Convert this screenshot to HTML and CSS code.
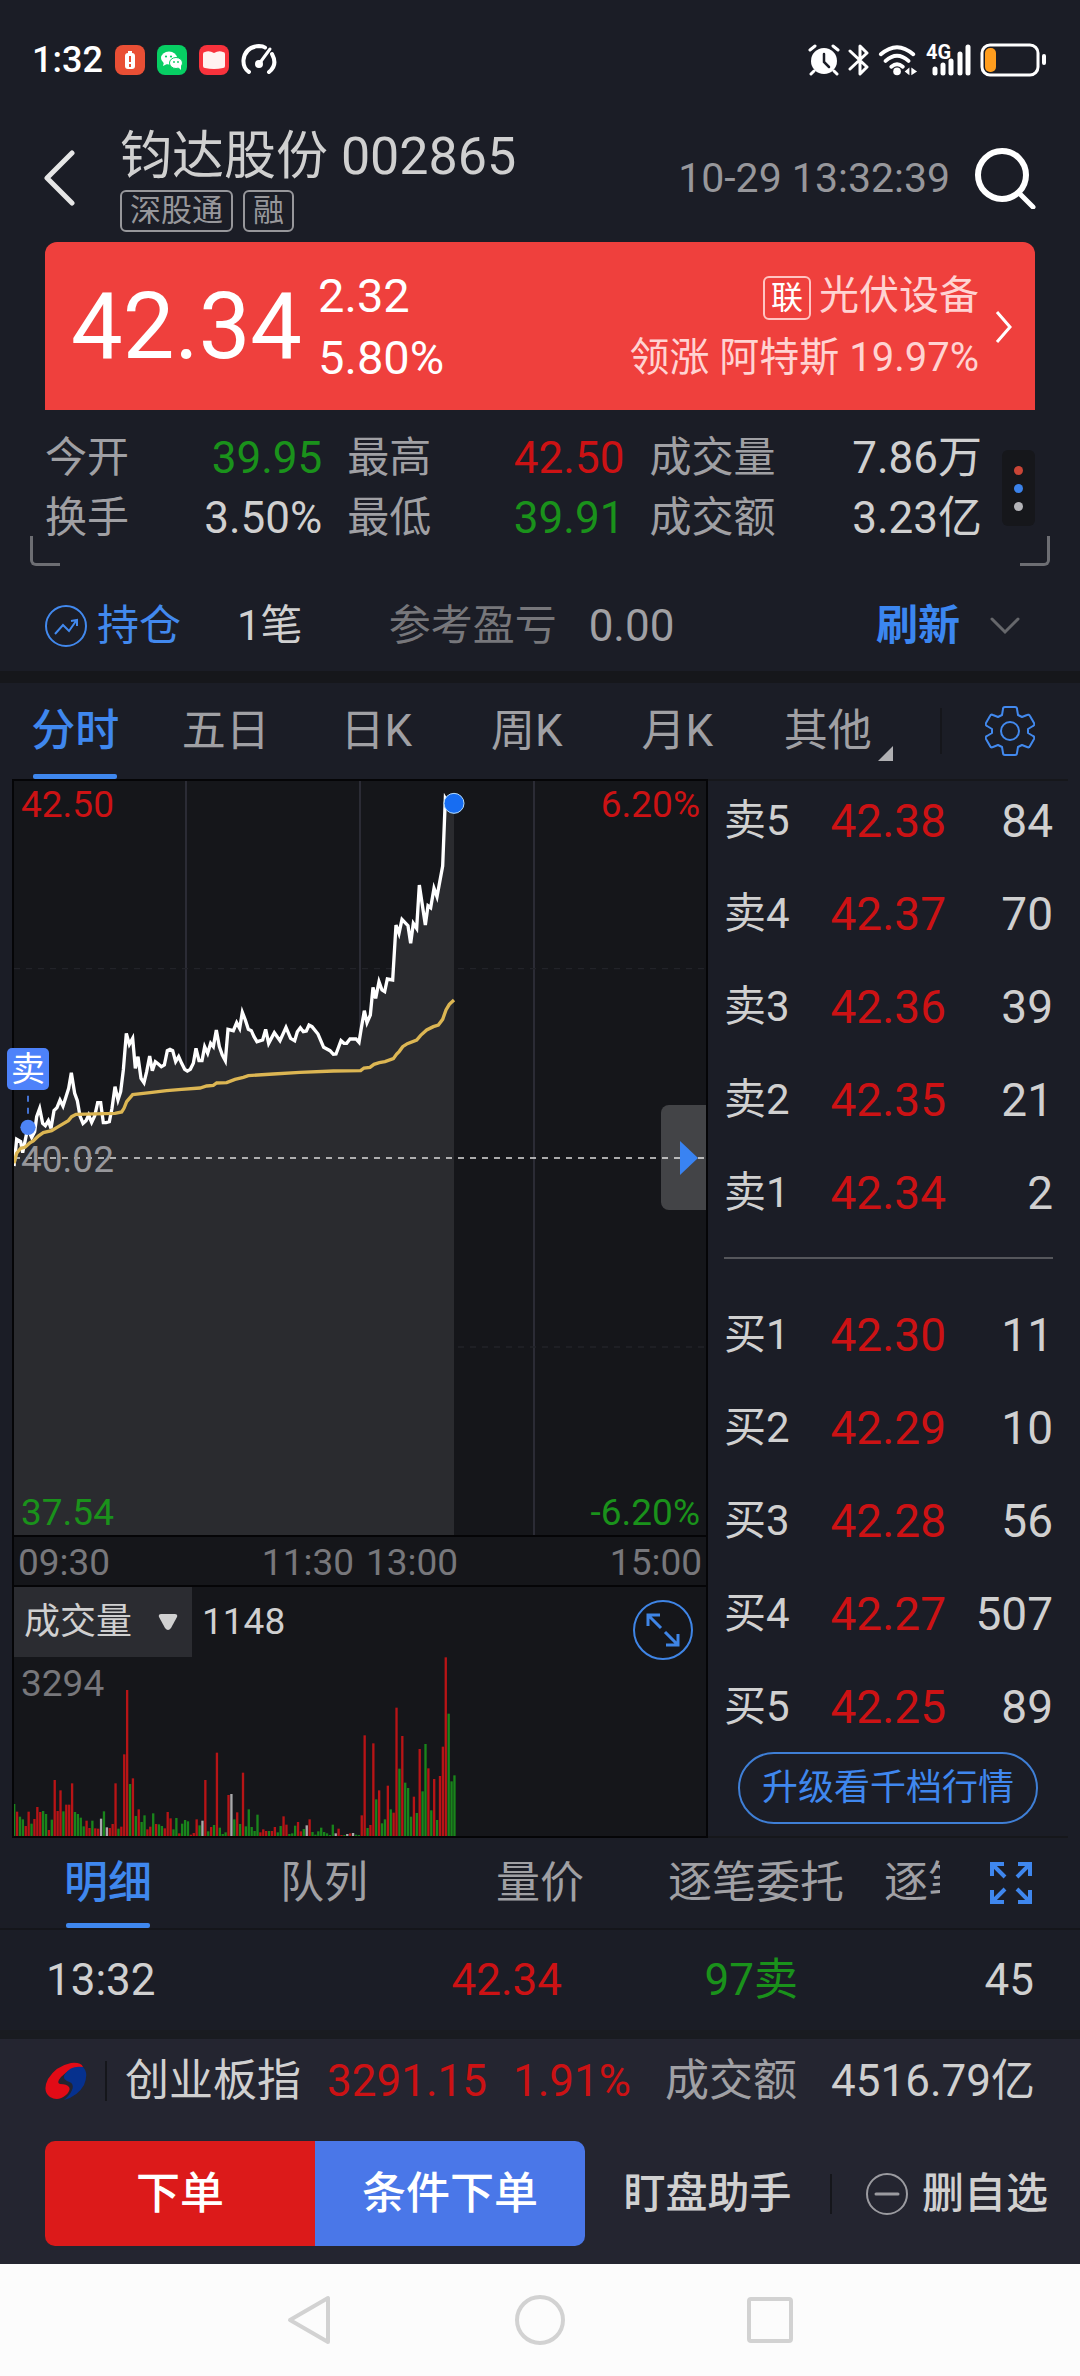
FILE: index.html
```html
<!DOCTYPE html>
<html lang="zh-CN">
<head>
    <meta charset="UTF-8">
    <meta name="viewport" content="width=device-width, initial-scale=1.0">
    <title>钧达股份 002865</title>
    <link rel="stylesheet" href="styles.css">
</head>
<body>
    <!-- Status bar -->
    <div class="status">
        <span class="clock">1:32</span>
        <svg class="app" viewBox="0 0 30 30"><rect width="30" height="30" rx="8" fill="#e94f35"/><rect x="10" y="8" width="10" height="16" rx="3" fill="#fff"/><rect x="13" y="6" width="4" height="3" fill="#fff"/><path d="M15 11v6M15 19v3" stroke="#e94f35" stroke-width="2"/></svg>
        <svg class="app" viewBox="0 0 30 30"><rect width="30" height="30" rx="8" fill="#07ce63"/><ellipse cx="12" cy="13" rx="8" ry="6.500" fill="#fff"/><path d="M7 17l-1 4 4-2z" fill="#fff"/><ellipse cx="19" cy="18" rx="6.500" ry="5.500" fill="#fff" stroke="#07ce63"/><path d="M21 22l3 3v-5z" fill="#fff"/><g fill="#07ce63"><circle cx="9" cy="11.500" r="1.100"/><circle cx="14" cy="11.500" r="1.100"/><circle cx="17" cy="17" r=".9"/><circle cx="21" cy="17" r=".9"/></g></svg>
        <svg class="app" viewBox="0 0 30 30"><rect width="30" height="30" rx="8" fill="#f8323c"/><path d="M6 7Q10 5 15 8Q20 5 24 7Q26 7 26 9V21Q26 23 24 23Q15 25 6 23Q4 23 4 21V9Q4 7 6 7Z" fill="#fff2f0"/></svg>
        <svg class="gauge" viewBox="0 0 36 32" fill="none" stroke="#fff" stroke-width="4" stroke-linecap="round"><path d="M8 28Q2 24 2.500 16Q4 3 18 2Q22 2 24 3.500M31 10Q37 21 28 28"/><path d="M29 5L18 20" stroke-width="3"/><circle cx="18" cy="20" r="2"/></svg>
        <div class="signals">
            <svg width="32" height="32" viewBox="0 0 32 32" fill="none" stroke="#fff" stroke-width="3" stroke-linecap="round"><circle cx="16" cy="17" r="13" fill="#fff" stroke="none"/><path d="M2 6l5-4M30 6l-5-4M6 27l-3 3M26 27l3 3"/><path d="M16 10v8l5 5" stroke="#1b1d26" stroke-width="2.500"/></svg>
            <svg width="22" height="32" viewBox="0 0 22 32" fill="none" stroke="#fff" stroke-width="3" stroke-linejoin="round" stroke-linecap="round"><path d="M2 7l17 16-7 7V2l7 7L2 25"/></svg>
            <svg width="40" height="32" viewBox="0 0 42 32" fill="none" stroke="#fff" stroke-width="4" stroke-linecap="round"><path d="M3 10Q20-5 37 10M8 17Q20 6 32 17M14 23Q20 18 26 23"/><circle cx="20" cy="28" r="4" fill="#fff" stroke="none"/><path d="M33 24v8l-5-4zM35 24v8l6-4z" fill="#fff" stroke="none"/></svg>
            <svg class="cell" width="46" height="32" viewBox="0 0 46 32"><text class="net" x="0" y="15">4G</text><g stroke="#fff" stroke-width="5" stroke-linecap="round"><path d="M9 25v4M17 21v8M25 17v12M34 10v19M42 3v26"/></g></svg>
            <svg width="66" height="34" viewBox="0 0 66 34"><rect x="2" y="2" width="56" height="30" rx="8" fill="none" stroke="#fff" stroke-width="3"/><rect x="5" y="5" width="11" height="24" rx="5" fill="#ff9d1e"/><rect x="62" y="11" width="4" height="11" rx="2" fill="#fff"/></svg>
        </div>
    </div>

    <!-- Title -->
    <header class="header">
        <button class="icon-btn back" aria-label="返回"><svg width="32" height="56" viewBox="0 0 32 56"><path d="M28 3L3 28l25 25" fill="none" stroke="#e6e6e6" stroke-width="5" stroke-linecap="round" stroke-linejoin="round"/></svg></button>
        <div class="title">
            <h1>钧达股份 002865</h1>
            <div class="tags"><span>深股通</span><span>融</span></div>
        </div>
        <time>10-29 13:32:39</time>
        <button class="icon-btn" aria-label="搜索"><svg width="62" height="62" viewBox="0 0 62 62" fill="none" stroke="#fff"><circle cx="28" cy="28" r="24" stroke-width="6"/><path d="M46 47l13 13" stroke-width="5" stroke-linecap="round"/></svg></button>
    </header>

    <!-- Price card -->
    <section class="price-card">
        <strong>42.34</strong>
        <div class="change"><span>2.32</span><span>5.80%</span></div>
        <div class="sector">
            <div><span class="link-tag">联</span>光伏设备</div>
            <div>领涨 阿特斯 19.97%</div>
        </div>
        <svg width="18" height="34" viewBox="0 0 18 34"><path d="M2 2l13 15L2 32" fill="none" stroke="#fff" stroke-width="3"/></svg>
    </section>

    <section class="stats">
        <dl>
            <div><dt>今开</dt><dd class="down">39.95</dd></div>
            <div><dt>最高</dt><dd class="up">42.50</dd></div>
            <div><dt>成交量</dt><dd>7.86万</dd></div>
            <div><dt>换手</dt><dd>3.50%</dd></div>
            <div><dt>最低</dt><dd class="down">39.91</dd></div>
            <div><dt>成交额</dt><dd>3.23亿</dd></div>
        </dl>
        <button class="more" aria-label="更多"><i></i><i></i><i></i></button>
    </section>

    <section class="position">
        <svg width="42" height="42" viewBox="0 0 42 42" fill="none" stroke="#4289ee" stroke-width="2"><circle cx="21" cy="21" r="20"/><path d="M10 29l8-9 6 6 7-10M26 16l6-1v6"/></svg>
        <span class="hold">持仓</span>
        <span class="count">1笔</span>
        <span class="pl-label">参考盈亏</span>
        <span class="pl">0.00</span>
        <button class="refresh">刷新</button>
        <svg width="30" height="18" viewBox="0 0 30 18"><path d="M2 2l13 13L28 2" fill="none" stroke="#66676b" stroke-width="3" stroke-linecap="round"/></svg>
    </section>

    <!-- Chart tabs -->
    <nav class="tabs chart-tabs">
        <div class="tab-list">
            <button class="active">分时</button>
            <button>五日</button>
            <button>日K</button>
            <button>周K</button>
            <button>月K</button>
            <button class="other">其他</button>
        </div>
        <button class="icon-btn tool" aria-label="设置"><svg width="50" height="50" viewBox="0 0 50 50" fill="none" stroke="#4289ee" stroke-width="2" stroke-linejoin="round"><path d="M20 1h10q2 0 2 2l1 6q2 1 4 2l5-2q2-1 3 1l4 7q1 2-1 3l-5 3v4l5 3q2 1 1 3l-4 7q-1 2-3 1l-5-2-4 2-1 6q0 2-2 2H20q-2 0-2-2l-1-6-4-2-5 2q-2 1-3-1l-4-7q-1-2 1-3l5-3v-4l-5-3q-2-1-1-3l4-7q1-2 3-1l5 2 4-2 1-6q0-2 2-2z"/><circle cx="25" cy="25" r="9"/></svg></button>
    </nav>

    <main class="market">
        <div class="chart">
            <div class="pane price-pane">
                <svg viewBox="42 3 2076 2262" preserveAspectRatio="none">
                    <g stroke="#30313b" stroke-width="5"><path d="M558 3V2265M1080 3V2265M1602 3V2265"/></g>
                    <path d="M42 566H2118M42 1701H2118" stroke="#222329" stroke-width="4" stroke-dasharray="18 18"/>
                    <path id="area" fill="#2a2b2f"/>
                    <path d="M42 1134H2118" stroke="#dcdcdc" stroke-width="5" stroke-dasharray="18 18"/>
                    <polyline id="price" fill="none" stroke="#fff" stroke-width="10"/>
                    <polyline id="avg" fill="none" stroke="#dcb653" stroke-width="10"/>
                    <circle cx="1362" cy="70" r="30" fill="#176df2" stroke="#b5ddff" stroke-width="3"/>
                    <path d="M84 947V1003" stroke="#4d84f5" stroke-width="5" stroke-dasharray="18 18"/>
                    <circle cx="84" cy="1042" r="23" fill="#4d84f5"/>
                </svg>
                <span class="label top-left up">42.50</span>
                <span class="label top-right up">6.20%</span>
                <span class="label mid-left">40.02</span>
                <span class="label bottom-left down">37.54</span>
                <span class="label bottom-right down">-6.20%</span>
                <span class="sell-mark">卖</span>
                <button class="expand" aria-label="展开"><svg width="18" height="34" viewBox="0 0 18 34"><path d="M0 0l18 17L0 34z" fill="#3983f2"/></svg></button>
            </div>
            <div class="pane axis"><span>09:30</span><span class="noon"><span>11:30</span><span>13:00</span></span><span>15:00</span></div>
            <div class="pane volume-pane">
                <svg class="bars" id="bars" viewBox="42 321 2076 747" preserveAspectRatio="none"></svg>
                <div class="volume-head">
                    <div class="picker">
                        <select aria-label="指标"><option>成交量</option></select>
                        <svg width="20" height="18" viewBox="0 0 20 18"><path d="M3 1h14q3 0 2 3l-6 11q-3 4-6 0L1 4q-1-3 2-3z" fill="#d0d0d0"/></svg>
                    </div>
                    <span>1148</span>
                    <button class="icon-btn zoom" aria-label="放大"><svg width="60" height="60" viewBox="0 0 60 60" fill="none" stroke="#3f85e6" stroke-width="2"><circle cx="30" cy="30" r="29"/><path d="M15 26V15h12M15 15l13 13M45 34v11H33M45 45L32 32" stroke-width="3"/></svg></button>
                </div>
                <div class="peak">3294</div>
            </div>
        </div>

        <!-- Order book -->
        <aside class="book">
            <table>
                <tr><th>卖5</th><td>42.38</td><td>84</td></tr>
                <tr><th>卖4</th><td>42.37</td><td>70</td></tr>
                <tr><th>卖3</th><td>42.36</td><td>39</td></tr>
                <tr><th>卖2</th><td>42.35</td><td>21</td></tr>
                <tr><th>卖1</th><td>42.34</td><td>2</td></tr>
            </table>
            <hr>
            <table>
                <tr><th>买1</th><td>42.30</td><td>11</td></tr>
                <tr><th>买2</th><td>42.29</td><td>10</td></tr>
                <tr><th>买3</th><td>42.28</td><td>56</td></tr>
                <tr><th>买4</th><td>42.27</td><td>507</td></tr>
                <tr><th>买5</th><td>42.25</td><td>89</td></tr>
            </table>
            <button class="upgrade">升级看千档行情</button>
        </aside>
    </main>

    <!-- Trade details -->
    <nav class="tabs detail-tabs">
        <div class="tab-list">
            <button class="active">明细</button>
            <button>队列</button>
            <button>量价</button>
            <button>逐笔委托</button>
            <button>逐笔成交</button>
        </div>
        <button class="icon-btn tool" aria-label="全屏"><svg width="42" height="42" viewBox="0 0 42 42" fill="none" stroke="#3f87ee" stroke-width="4"><path d="M2 14V2h12M2 2l13 13M28 2h12v12M40 2L27 15M2 28v12h12M2 40l13-13M40 28v12H28M40 40L27 27"/></svg></button>
    </nav>
    <div class="tick"><span>13:32</span><span class="up">42.34</span><span class="down">97卖</span><span>45</span></div>

    <footer class="dock">
        <div class="index">
            <svg width="42" height="38" viewBox="0 0 42 38"><path d="M38 5Q36 0 26 1Q11 4 3 17Q-3 29 5 35Q13 40 21 33Q26 28 24 25Q22 22 15 22Q11 21 16 15Q23 7 38 5Z" fill="#e20b16"/><path d="M38 5Q26 3 20 12Q17 17 22 19Q30 21 27 28Q25 33 19 38Q33 34 39 23Q44 11 38 5Z" fill="#06318e"/></svg>
            <i class="bar"></i>
            <span>创业板指</span>
            <span class="up quote">3291.15</span>
            <span class="up">1.91%</span>
            <span class="muted">成交额</span>
            <span class="amount">4516.79亿</span>
        </div>
        <div class="actions">
            <button class="buy">下单</button>
            <button class="cond">条件下单</button>
            <button class="plain">盯盘助手</button>
            <i class="bar"></i>
            <button class="remove"><svg width="42" height="42" viewBox="0 0 42 42" fill="none" stroke="#9b9ba0" stroke-width="2"><circle cx="21" cy="21" r="20"/><path d="M10 21h22" stroke-width="3" stroke-linecap="round"/></svg>删自选</button>
        </div>
    </footer>

    <div class="sysnav">
        <svg width="52" height="52" viewBox="0 0 52 52"><path d="M44 4v44L6 26z"/></svg>
        <svg width="52" height="52" viewBox="0 0 52 52"><circle cx="26" cy="26" r="23"/></svg>
        <svg width="52" height="52" viewBox="0 0 52 52"><rect x="5" y="5" width="42" height="42" rx="2"/></svg>
    </div>

    <script>
        const price = "42,1158 50,1078 62,1085 68,1118 83,1045 95,1072 104,1055 110,1010 119,985 128,1030 136,1037 145,1022 153,1045 162,992 171,983 180,960 189,978 198,950 206,925 214,878 224,940 232,962 240,1008 249,1030 258,1022 266,1005 275,1027 284,1008 293,968 302,968 310,1028 318,1028 328,1025 336,985 345,920 354,960 362,935 370,870 379,760 388,793 398,775 406,865 414,830 423,895 432,908 440,875 449,828 457,872 466,845 475,852 484,860 493,855 502,812 510,808 518,812 527,845 536,830 545,850 554,868 562,873 571,868 580,850 588,805 597,842 606,842 614,800 623,820 632,790 640,800 649,750 658,800 667,825 676,842 684,748 700,752 710,728 719,745 727,697 736,720 745,748 754,752 762,770 771,785 788,780 797,748 806,790 823,758 840,782 858,742 872,775 884,782 892,755 901,743 910,755 919,753 927,735 936,740 954,762 971,802 990,812 1000,823 1008,822 1023,782 1032,790 1040,790 1050,777 1068,777 1077,787 1083,750 1093,692 1101,728 1111,705 1119,622 1127,655 1137,605 1146,630 1154,635 1162,597 1178,600 1188,435 1197,460 1206,418 1224,437 1232,490 1240,430 1250,445 1258,315 1276,435 1284,377 1292,383 1302,325 1311,350 1328,258 1336,55 1345,70 1362,70";
        const avg = "42,1150 50,1120 62,1105 75,1102 90,1088 100,1083 115,1068 130,1058 155,1052 175,1040 205,1022 215,1010 228,1003 345,1000 365,996 372,985 380,965 398,944 450,938 500,932 545,928 600,924 620,918 640,916 650,909 680,908 705,898 730,892 745,887 820,882 900,877 1000,873 1082,872 1092,864 1110,862 1122,853 1138,848 1155,845 1180,836 1190,822 1198,814 1208,800 1222,791 1250,780 1262,766 1280,750 1300,740 1315,735 1328,718 1338,690 1348,673 1362,660";
        document.getElementById("price").setAttribute("points", price);
        document.getElementById("avg").setAttribute("points", avg);
        document.getElementById("area").setAttribute("d", `M${price} V2265 H42 Z`);

        // one bar per minute: r = up, g = down, w = flat
        const volume = "g96 r73 g58 g50 r30 r73 g37 r51 r87 r72 g75 g66 r18 g49 r168 r75 r137 g74 r94 r94 r158 g72 g66 g55 g29 r46 r24 g46 r23 r22 w52 g74 w26 r24 r36 r158 g22 r28 r245 r438 g156 r173 g60 r80 g42 g62 r20 r28 g68 r36 g35 g30 r23 r72 r53 g20 g54 r8 g37 g48 g44 r4 r9 r50 g32 w46 r168 g14 r27 g33 r250 g25 g6 g11 r123 w126 g50 r71 g36 r190 g29 g80 g27 g15 g64 r11 r20 r15 g15 r15 r27 g11 g30 r59 r34 g6 g8 g31 r42 r14 g21 w32 r50 g12 g4 g14 g25 g12 g8 g3 g34 w8 r22 r3 g3 w6 r8 w9 g4 g3 r62 r302 g24 r33 r278 g110 r137 g38 g50 r151 g80 r70 r385 g202 r300 g160 g144 g58 r118 g69 r261 g134 g276 r203 g77 r171 g48 r180 r268 r536 g367 g164 g182";
        const colors = { r: "#b81416", g: "#19851b", w: "#a9a9ab" };
        document.getElementById("bars").innerHTML = volume.split(" ").map((bar, i) => {
            const h = Number(bar.slice(1));
            return `<rect x="${39 + i * 8.69}" y="${1068 - h}" width="7" height="${h}" fill="${colors[bar[0]]}"/>`;
        }).join("");
    </script>
</body>
</html>
```
FILE: styles.css
```css
* {
    box-sizing: border-box;
}

body {
    margin: 0;
    background: #1b1d26;
    color: #d0d0d0;
    font-family: Roboto, "Noto Sans CJK SC", sans-serif;
    font-size: 44px;
    line-height: 60px;
}

button, select {
    padding: 0;
    border: none;
    background: none;
    color: inherit;
    font: inherit;
}

svg {
    display: block;
    flex: none;
}

h1, dl, dd {
    margin: 0;
}

.up {
    color: #cc1214;
}

.down {
    color: #1a921b;
}

.muted {
    color: #a0a0a4;
}

.bar {
    width: 2px;
    height: 40px;
    background: #15161b;
}

/* Status bar */
.status {
    display: flex;
    align-items: center;
    gap: 12px;
    height: 120px;
    padding: 0 34px 0 32px;
    color: #fff;
}

.clock {
    font-size: 36px;
    font-weight: 500;
}

.app {
    width: 30px;
    height: 30px;
}

.gauge {
    width: 36px;
    height: 32px;
}

.signals {
    display: flex;
    align-items: center;
    gap: 8px;
    margin-left: auto;
}

.cell {
    overflow: visible;
}

.net {
    fill: #fff;
    font-size: 20px;
    font-weight: 700;
}

/* Header */
.header {
    display: flex;
    align-items: center;
    padding: 4px 44px 10px;
}

.title {
    margin-left: 44px;
}

.title h1 {
    font-size: 52px;
    font-weight: 400;
    line-height: 66px;
}

.tags {
    display: flex;
    gap: 10px;
}

.tags span {
    padding: 0 8px;
    border: 2px solid #97979b;
    border-radius: 6px;
    color: #97979b;
    font-size: 31px;
    line-height: 38px;
}

.header time {
    margin: 0 24px 0 auto;
    color: #97979b;
    font-size: 41px;
}

/* Price card */
.price-card {
    display: flex;
    align-items: center;
    height: 168px;
    margin: 0 45px;
    padding: 2px 22px 0 26px;
    border-radius: 12px 12px 0 0;
    background: #ef403d;
    color: #fff;
}

.price-card strong {
    font-size: 92px;
    font-weight: 400;
}

.change {
    display: flex;
    flex-direction: column;
    margin-left: 16px;
    font-size: 47px;
    line-height: 62px;
}

.sector {
    margin: 0 16px 0 auto;
    color: #ffd3d2;
    font-size: 40px;
    line-height: 62px;
    text-align: right;
}

.link-tag {
    display: inline-block;
    margin-right: 8px;
    padding: 0 6px;
    border: 2px solid #ffc4c2;
    border-radius: 6px;
    color: #fff;
    font-size: 32px;
    line-height: 40px;
    vertical-align: middle;
}

/* Stats */
.stats {
    position: relative;
    display: flex;
    align-items: center;
    gap: 20px;
    padding: 18px 45px 33px;
}

.stats::before,
.stats::after {
    content: "";
    position: absolute;
    bottom: 15px;
    width: 27px;
    height: 27px;
    border: solid #6d6e73;
    border-width: 0 0 3px 3px;
    border-bottom-left-radius: 6px;
}

.stats::before {
    left: 30px;
}

.stats::after {
    right: 30px;
    border-width: 0 3px 3px 0;
    border-radius: 0 0 6px 0;
}

.stats dl {
    flex: 1;
    display: grid;
    grid-template-columns: 5fr 5fr 6fr;
    column-gap: 25px;
}

.stats dl div {
    display: flex;
    justify-content: space-between;
}

.stats dt {
    color: #a0a0a4;
    font-size: 42px;
}

.more {
    display: flex;
    flex-direction: column;
    align-items: center;
    justify-content: center;
    gap: 9px;
    width: 33px;
    height: 76px;
    border-radius: 6px;
    background: #16171b;
}

.more i {
    width: 9px;
    height: 9px;
    border-radius: 50%;
    background: #b4b4b8;
}

.more i:nth-child(1) {
    background: #c94536;
}

.more i:nth-child(2) {
    background: #3b82ea;
}

/* Position */
.position {
    display: flex;
    align-items: center;
    height: 90px;
    padding: 0 60px 0 45px;
    font-size: 42px;
}

.hold {
    margin-left: 10px;
    color: #4289ee;
}

.count {
    margin-left: 56px;
}

.pl-label {
    margin-left: 86px;
    color: #77777b;
}

.pl {
    margin-left: 32px;
    color: #a0a0a4;
    font-size: 44px;
}

.refresh {
    margin: 0 30px 0 auto;
    color: #3b86f0;
    font-weight: 700;
}

/* Tabs */
.tabs {
    display: flex;
    color: #a0a0a4;
}

.tab-list {
    flex: 1;
    display: flex;
    overflow: hidden;
}

.tab-list button {
    position: relative;
    flex: 1 0 0;
}

.tab-list .active {
    color: #3f87ee;
    font-weight: 500;
}

.active::after {
    content: "";
    position: absolute;
    left: 50%;
    bottom: 0;
    width: 84px;
    height: 5px;
    margin-left: -42px;
    border-radius: 2px;
    background: #3f87ee;
}

.tool {
    display: flex;
    align-items: center;
    margin-right: 45px;
}

.chart-tabs {
    height: 108px;
    border-top: 12px solid #16171b;
}

.chart-tabs .tool {
    position: relative;
    padding-left: 82px;
}

.chart-tabs .tool::before {
    content: "";
    position: absolute;
    left: 37px;
    width: 2px;
    height: 46px;
    background: #15161b;
}

.other::after {
    content: "";
    position: absolute;
    right: 10px;
    bottom: 18px;
    border-left: 15px solid transparent;
    border-bottom: 15px solid #b0b0b3;
}

.detail-tabs {
    height: 92px;
    border-bottom: 2px solid #15161b;
}

.detail-tabs .tab-list {
    margin-right: 50px;
}

.detail-tabs .tab-list button {
    flex: 0 0 20%;
    min-width: 216px;
}

.detail-tabs .tool {
    margin-right: 48px;
}

/* Chart and order book */
.market {
    display: flex;
    margin: 0 12px;
}

.chart {
    flex: 1;
    background: #15161a;
    border: solid #050507;
    border-width: 0 2px;
    font-size: 37px;
}

.pane {
    position: relative;
    border-top: 2px solid #050507;
}

.price-pane {
    height: 756px;
}

.price-pane > svg,
.bars {
    width: 100%;
    height: 100%;
}

.label {
    position: absolute;
    line-height: 44px;
}

.top-left {
    left: 7px;
    top: 2px;
}

.top-right {
    right: 6px;
    top: 2px;
}

.mid-left {
    left: 7px;
    top: 50%;
    margin-top: -20px;
    color: #97979b;
}

.bottom-left {
    left: 7px;
    bottom: 0;
}

.bottom-right {
    right: 6px;
    bottom: 0;
}

.sell-mark {
    position: absolute;
    left: -7px;
    top: 267px;
    width: 42px;
    border-radius: 5px;
    background: #4d82fa;
    color: #fff;
    font-size: 34px;
    line-height: 42px;
    text-align: center;
}

.expand {
    position: absolute;
    right: 0;
    top: 50%;
    width: 45px;
    height: 105px;
    margin-top: -53px;
    padding-left: 19px;
    border-radius: 8px 0 0 8px;
    background: rgba(255, 255, 255, 0.2);
}

.axis {
    display: flex;
    justify-content: space-between;
    height: 50px;
    padding: 0 4px;
    color: #77777b;
    line-height: 52px;
}

.noon {
    display: flex;
    gap: 12px;
}

.volume-pane {
    height: 253px;
    border-bottom: 2px solid #050507;
}

.bars {
    position: absolute;
    inset: 0;
}

.volume-head {
    display: flex;
    align-items: center;
    gap: 10px;
    height: 70px;
}

.picker {
    display: flex;
    align-items: center;
    justify-content: space-between;
    width: 178px;
    height: 70px;
    padding: 0 14px 0 10px;
    background: #2b2c31;
}

.picker select {
    appearance: none;
    font-size: 36px;
}

.zoom {
    margin: 16px 13px 0 auto;
}

.peak {
    padding-left: 7px;
    color: #77777b;
    line-height: 54px;
}

.book {
    width: 360px;
    padding: 10px 15px 0 16px;
    border: solid #16171b;
    border-width: 2px 0;
    font-size: 46px;
}

.book table {
    width: 100%;
    margin: -16px 0;
    border-spacing: 0;
    line-height: 92px;
}

.book th,
.book td {
    padding: 0 0 1px;
    text-align: right;
}

.book th {
    width: 66px;
    font-size: 42px;
    font-weight: 400;
    text-align: left;
    white-space: nowrap;
}

.book td:nth-child(2) {
    width: 156px;
    color: #cc1214;
}

.book hr {
    margin: 33px 0 46px;
    border: none;
    border-top: 2px solid #55565b;
}

.upgrade {
    display: block;
    width: 300px;
    height: 72px;
    margin: 14px 0 0 14px;
    border: 2px solid #3f7fd6;
    border-radius: 36px;
    color: #3f87ee;
    font-size: 36px;
}

/* Last trade */
.tick {
    display: grid;
    grid-template-columns: 280px 1fr 1fr 1fr;
    height: 109px;
    padding: 0 46px;
    border-bottom: 9px solid #191b20;
    line-height: 100px;
    text-align: right;
}

.tick span:first-child {
    text-align: left;
}

/* Dock */
.dock {
    padding-bottom: 18px;
    background: #242530;
}

.index {
    display: flex;
    align-items: center;
    gap: 18px;
    height: 84px;
    padding: 0 45px;
}

.index .quote {
    margin: 0 8px;
}

.index .muted,
.index .amount {
    margin-left: auto;
}

.actions {
    display: flex;
    align-items: center;
    height: 123px;
    padding: 18px 32px 0 45px;
    font-size: 42px;
    font-weight: 500;
}

.buy,
.cond {
    width: 270px;
    height: 105px;
    background: #dc1a1a;
    color: #fff;
    font-size: 44px;
}

.buy {
    border-radius: 10px 0 0 10px;
}

.cond {
    border-radius: 0 10px 10px 0;
    background: #4a77e8;
}

.plain {
    flex: 1;
}

.remove {
    display: flex;
    align-items: center;
    gap: 14px;
    margin-left: 34px;
}

/* System navigation */
.sysnav {
    display: flex;
    justify-content: center;
    align-items: center;
    gap: 178px;
    height: 112px;
    background: #fcfcfc;
}

.sysnav svg {
    fill: none;
    stroke: #d2d2d2;
    stroke-width: 4;
    stroke-linejoin: round;
}
```
